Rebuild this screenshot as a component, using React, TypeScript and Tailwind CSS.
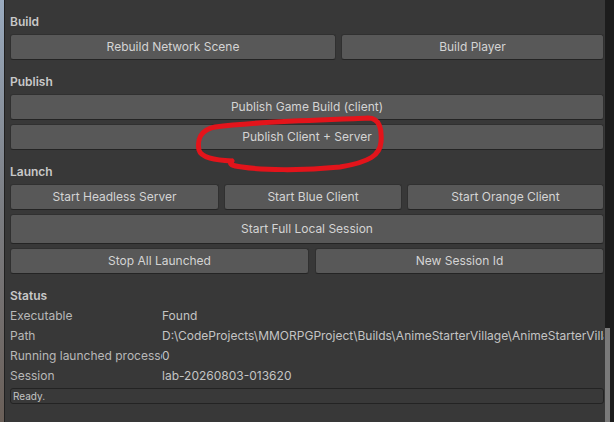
import React from "react"

function Btn({ label, className = "" }: { label: string; className?: string }) {
  return (
    <div
      className={`flex items-center justify-center h-[26px] rounded-[3px] bg-[#585858] border border-[#303030] border-b-[#242424] text-[12px] text-[#d4d4d4] whitespace-nowrap ${className}`}
    >
      {label}
    </div>
  )
}

function SectionLabel({ children }: { children: string }) {
  return <div className="h-[18px] leading-[18px] mb-[3px] font-semibold text-[12px] text-[#c8c8c8]">{children}</div>
}

function StatusRow({ label, value }: { label: string; value: string }) {
  return (
    <div className="flex h-[20px] items-center whitespace-nowrap overflow-hidden text-[12px]">
      <div className="w-[152px] shrink-0 overflow-hidden text-[#b8b8b8]">{label}</div>
      <div className="text-[#c4c4c4]">{value}</div>
    </div>
  )
}

export default function App() {
  return (
    <div className="relative w-[614px] h-[422px] flex overflow-hidden bg-[#383838]" style={{ fontFamily: "Inter, 'Noto Sans', sans-serif" }}>
      {/* desktop peeking through on the left */}
      <div className="w-[4px] shrink-0 bg-gradient-to-b from-[#9aabbf] via-[#7b7d82] to-[#6a5f58]" />
      <div className="w-[1px] shrink-0 bg-[#202020]" />

      <div className="flex-1 min-w-0 flex flex-col pt-[13px] pl-[5px] pr-[1px]">
        <SectionLabel>Build</SectionLabel>
        <div className="flex gap-[5px]">
          <Btn label="Rebuild Network Scene" className="w-[326px]" />
          <Btn label="Build Player" className="flex-1" />
        </div>

        <div className="mt-[13px]">
          <SectionLabel>Publish</SectionLabel>
          <div className="flex flex-col gap-[4px]">
            <Btn label="Publish Game Build (client)" />
            <Btn label="Publish Client + Server" />
          </div>
        </div>

        <div className="mt-[13px]">
          <SectionLabel>Launch</SectionLabel>
          <div className="flex flex-col gap-[4px]">
            <div className="flex gap-[5px]">
              <Btn label="Start Headless Server" className="w-[209px]" />
              <Btn label="Start Blue Client" className="w-[178px]" />
              <Btn label="Start Orange Client" className="flex-1" />
            </div>
            <Btn label="Start Full Local Session" className="h-[30px]" />
            <div className="flex gap-[6px]">
              <Btn label="Stop All Launched" className="w-[299px]" />
              <Btn label="New Session Id" className="flex-1" />
            </div>
          </div>
        </div>

        <div className="mt-[13px]">
          <div className="h-[18px] leading-[18px] mb-[1px] font-semibold text-[12px] text-[#c8c8c8]">Status</div>
          <StatusRow label="Executable" value="Found" />
          <StatusRow label="Path" value="D:\CodeProjects\MMORPGProject\Builds\AnimeStarterVillage\AnimeStarterVillage.exe" />
          <StatusRow label="Running launched processes" value="0" />
          <StatusRow label="Session" value="lab-20260803-013620" />
          <div className="mt-[2px] h-[16px] rounded-[3px] bg-[#393939] border border-[#232323] flex items-center px-[2px] text-[10px] text-[#c4c4c4]">
            Ready.
          </div>
        </div>
      </div>

      {/* scrollbar */}
      <div className="w-[9px] shrink-0 flex flex-col bg-[#1c1c1c]">
        <div className="h-[328px] shrink-0" />
        <div className="flex-1 w-[5px] bg-[#7a7a7a]" />
      </div>

      {/* red hand-drawn annotation */}
      <svg className="absolute inset-0 pointer-events-none" width="614" height="422" viewBox="0 0 614 422">
        <path
          d="M 232 161 C 215 160, 201 158, 199 150 C 197 140, 200 130, 215 127 C 260 121, 330 120, 368 118 C 380 118, 382 130, 381 142 C 380 155, 370 162, 340 167 C 300 171, 262 170, 242 167 C 232 166, 228 164, 232 161"
          fill="none"
          stroke="#e3141b"
          strokeWidth="5"
          strokeLinecap="round"
          strokeLinejoin="round"
        />
      </svg>
    </div>
  )
}
